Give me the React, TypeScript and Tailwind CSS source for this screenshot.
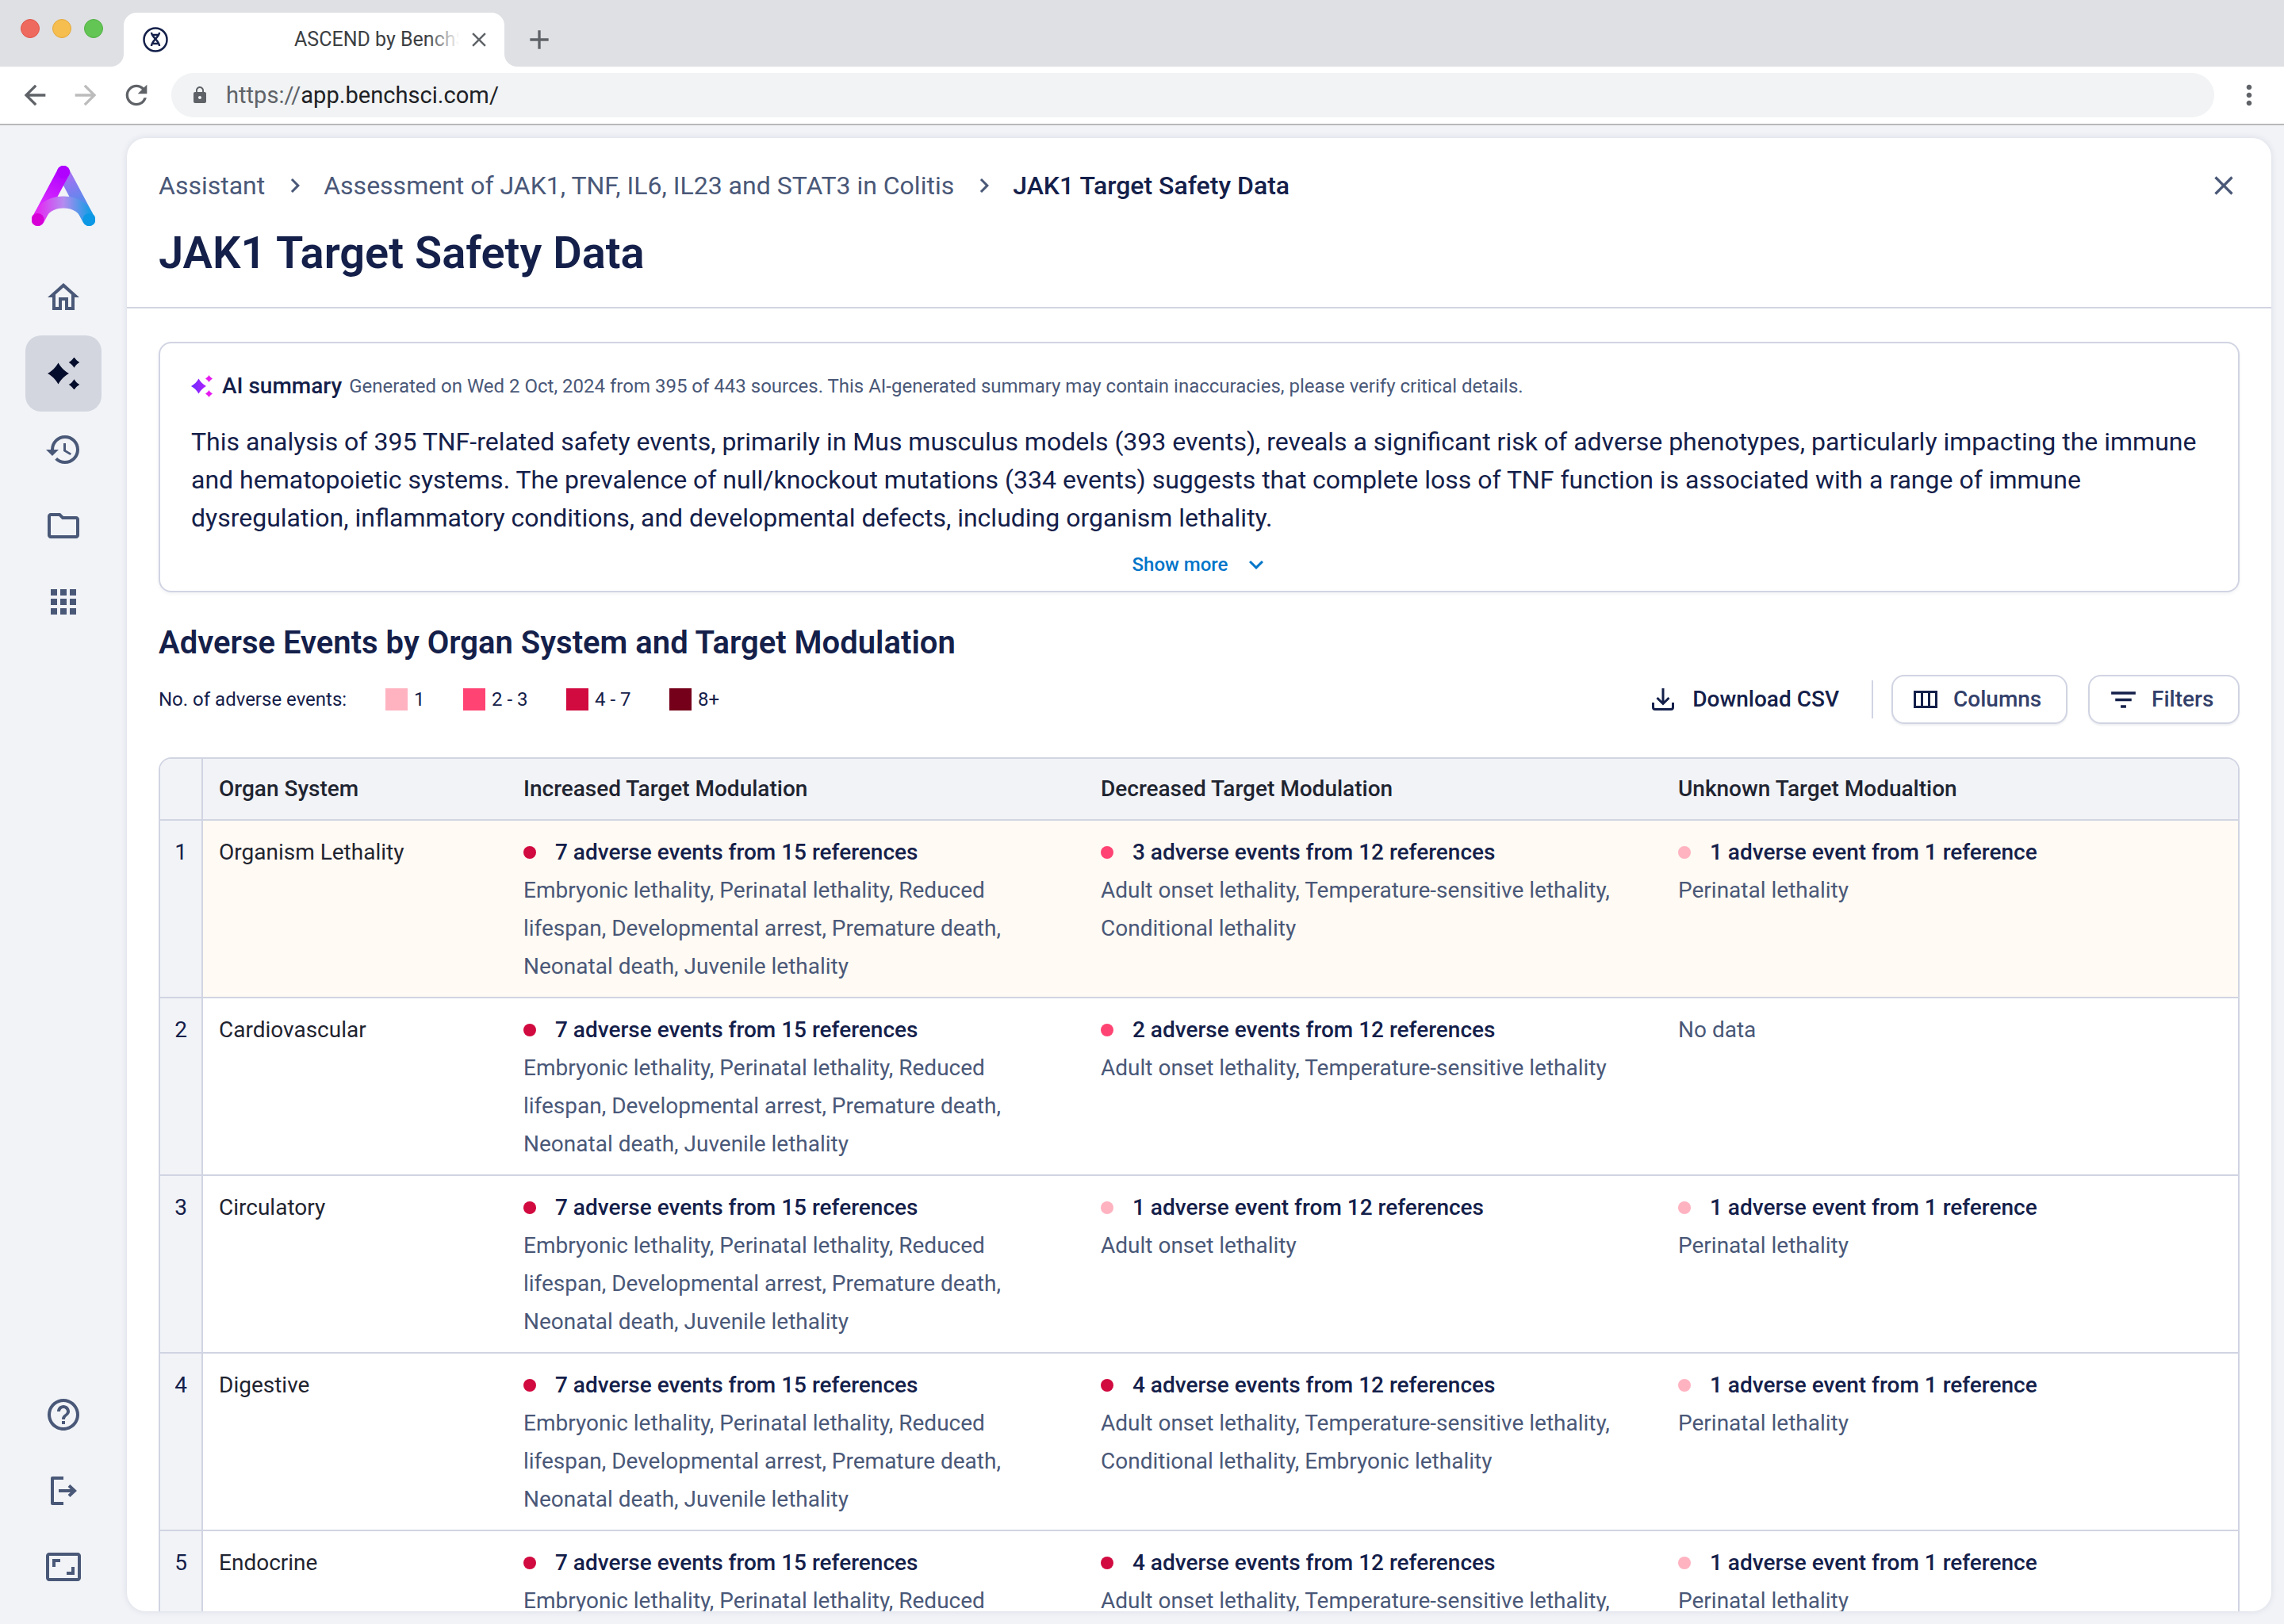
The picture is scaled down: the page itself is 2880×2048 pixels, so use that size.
import { MdAdd, MdApps, MdArrowBack, MdArrowForward, MdChevronRight, MdClose, MdFilterList, MdHelpOutline, MdHistory, MdKeyboardArrowDown, MdLock, MdMoreVert, MdOutlineAspectRatio, MdOutlineFolder, MdOutlineHome, MdRefresh } from 'react-icons/md'

const LETHAL_A = 'Embryonic lethality, Perinatal lethality, Reduced lifespan, Developmental arrest, Premature death, Neonatal death, Juvenile lethality'
const LETHAL_B = 'Adult onset lethality, Temperature-sensitive lethality, Conditional lethality'
const LETHAL_C = 'Adult onset lethality, Temperature-sensitive lethality'
const LETHAL_D = 'Adult onset lethality, Temperature-sensitive lethality, Conditional lethality, Embryonic lethality'

type Cell = { dot: string; title: string; text: string } | null

const DOT = { one: 'bg-[#ffb3c1]', two: 'bg-[#ff4372]', four: 'bg-[#d10a3f]' }

const incr: Cell = { dot: DOT.four, title: '7 adverse events from 15 references', text: LETHAL_A }
const unkn: Cell = { dot: DOT.one, title: '1 adverse event from 1 reference', text: 'Perinatal lethality' }

const ROWS: { name: string; dec: Cell; unk: Cell; hl?: boolean }[] = [
  { name: 'Organism Lethality', hl: true, dec: { dot: DOT.two, title: '3 adverse events from 12 references', text: LETHAL_B }, unk: unkn },
  { name: 'Cardiovascular', dec: { dot: DOT.two, title: '2 adverse events from 12 references', text: LETHAL_C }, unk: null },
  { name: 'Circulatory', dec: { dot: DOT.one, title: '1 adverse event from 12 references', text: 'Adult onset lethality' }, unk: unkn },
  { name: 'Digestive', dec: { dot: DOT.four, title: '4 adverse events from 12 references', text: LETHAL_D }, unk: unkn },
  { name: 'Endocrine', dec: { dot: DOT.four, title: '4 adverse events from 12 references', text: LETHAL_D }, unk: unkn },
]

const LEGEND = [
  { label: '1', cls: 'bg-[#ffb3c1]', w: 'w-[98px]' },
  { label: '2 - 3', cls: 'bg-[#ff4372]', w: 'w-[130px]' },
  { label: '4 - 7', cls: 'bg-[#d10a3f]', w: 'w-[130px]' },
  { label: '8+', cls: 'bg-[#750019]', w: 'w-[70px]' },
]

function star(cx: number, cy: number, r: number) {
  const k = r * 0.27
  return `M${cx} ${cy - r}C${cx + k} ${cy - k * 2} ${cx + k * 2} ${cy - k} ${cx + r} ${cy}C${cx + k * 2} ${cy + k} ${cx + k} ${cy + k * 2} ${cx} ${cy + r}C${cx - k} ${cy + k * 2} ${cx - k * 2} ${cy + k} ${cx - r} ${cy}C${cx - k * 2} ${cy - k} ${cx - k} ${cy - k * 2} ${cx} ${cy - r}Z`
}

function Logo() {
  return (
    <svg width="80" height="76" viewBox="0 0 80 76" fill="none">
      <defs>
        <linearGradient id="lg-l" x1="40" y1="8" x2="8" y2="68" gradientUnits="userSpaceOnUse">
          <stop offset="0" stopColor="#b000ff" />
          <stop offset="1" stopColor="#e93cff" />
        </linearGradient>
        <linearGradient id="lg-r" x1="40" y1="8" x2="72" y2="68" gradientUnits="userSpaceOnUse">
          <stop offset="0" stopColor="#b06cf5" />
          <stop offset="1" stopColor="#2a9be6" />
        </linearGradient>
        <linearGradient id="lg-a" x1="8" y1="0" x2="72" y2="0" gradientUnits="userSpaceOnUse">
          <stop offset="0" stopColor="#e22cf2" />
          <stop offset="0.5" stopColor="#b48cf0" />
          <stop offset="1" stopColor="#1d9ce6" />
        </linearGradient>
      </defs>
      <path d="M72 68L40 8" stroke="url(#lg-r)" strokeWidth="16" strokeLinecap="round" />
      <path d="M8 68L40 8" stroke="url(#lg-l)" strokeWidth="16" strokeLinecap="round" />
      <path d="M8 68C14 52 26 46 40 46C54 46 66 52 72 68" stroke="url(#lg-a)" strokeWidth="15" strokeLinecap="round" />
      <circle cx="40" cy="8" r="8" fill="#b000ff" />
      <circle cx="7.5" cy="68" r="8" fill="#d600d6" />
      <circle cx="72.5" cy="68" r="8" fill="#0d98e5" />
    </svg>
  )
}

function Favicon() {
  return (
    <svg width="32" height="32" viewBox="0 0 32 32" fill="none" stroke="#14204a">
      <ellipse cx="16" cy="16" rx="14.5" ry="14.5" strokeWidth="2.5" />
      <path d="M11 7C11 13 21 17 21 24M21 7C21 13 11 17 11 24M12 10H20M11.5 21H20.5" strokeWidth="2.4" />
    </svg>
  )
}

function Sparkle({ grad }: { grad?: boolean }) {
  if (grad) {
    return (
      <svg width="28" height="28" viewBox="0 0 28 28">
        <defs>
          <linearGradient id="sp-g" x1="0" y1="0" x2="19" y2="0" gradientUnits="userSpaceOnUse">
            <stop offset="0" stopColor="#6a2cff" />
            <stop offset="1" stopColor="#b320ff" />
          </linearGradient>
        </defs>
        <path d={star(9.5, 14, 9.5)} fill="url(#sp-g)" />
        <path d={star(22.5, 4.5, 4.5)} fill="#e619f0" />
        <path d={star(22.5, 23.5, 4.5)} fill="#e619f0" />
      </svg>
    )
  }
  return (
    <svg width="40" height="40" viewBox="0 0 40 40" fill="#040d2b">
      <path d={star(13.5, 20, 13.5)} />
      <path d={star(33.5, 6, 6.8)} />
      <path d={star(33.5, 34, 6.8)} />
    </svg>
  )
}

function Logout() {
  return (
    <svg width="36" height="36" viewBox="0 0 36 36" fill="none" stroke="#4a5878" strokeWidth="4">
      <path d="M18 2H4V34H18" strokeLinejoin="round" />
      <path d="M12 18H31M25 11.5L32 18L25 24.5" />
    </svg>
  )
}

function Download() {
  return (
    <svg width="28" height="28" viewBox="0 0 28 28" fill="none" stroke="#14204a" strokeWidth="3">
      <path d="M14 0V19M6.5 12L14 19.5L21.5 12" />
      <path d="M1.5 18V24C1.5 25.5 2.5 26.5 4 26.5H24C25.5 26.5 26.5 25.5 26.5 24V18" />
    </svg>
  )
}

function ColumnsIcon() {
  return (
    <svg width="30" height="22" viewBox="0 0 30 22" fill="none" stroke="#14204a" strokeWidth="3">
      <rect x="1.5" y="1.5" width="27" height="19" />
      <path d="M10.5 2V20M19.5 2V20" />
    </svg>
  )
}

function NavItem({ children, active }: { children: React.ReactNode; active?: boolean }) {
  return (
    <div className={`w-[96px] h-[96px] rounded-[20px] flex items-center justify-center text-[#4a5878] ${active ? 'bg-[#d3d6df]' : ''}`}>
      {children}
    </div>
  )
}

function EventCell({ cell, bg }: { cell: Cell; bg: string }) {
  return (
    <div className={`pl-5 pr-[60px] pt-[16px] overflow-hidden ${bg}`}>
      {cell ? (
        <>
          <div className="flex items-center gap-[24px]">
            <span className={`w-4 h-4 rounded-full shrink-0 ${cell.dot}`} />
            <span className="font-medium text-[#14204a]">{cell.title}</span>
          </div>
          <p className="text-[#4a5878]">{cell.text}</p>
        </>
      ) : (
        <p className="text-[#4a5878]">No data</p>
      )}
    </div>
  )
}

export default function App() {
  return (
    <div className="w-[2880px] h-[2048px] overflow-hidden flex flex-col bg-[#f1f3f7] font-['Roboto',sans-serif]">
      {/* Browser tabs */}
      <div className="h-[84px] shrink-0 bg-[#dfe0e4] flex">
        <div className="w-[156px] flex items-center gap-4 pl-[26px] pb-[16px] pt-[4px]">
          <span className="w-6 h-6 rounded-full bg-[#ee6a5f] border border-[#e0564a]" />
          <span className="w-6 h-6 rounded-full bg-[#f6be4f] border border-[#e3a93c]" />
          <span className="w-6 h-6 rounded-full bg-[#62c554] border border-[#52b043]" />
        </div>
        <div className="relative mt-[16px] w-[480px] h-[68px] bg-white rounded-t-[16px] flex items-center pl-[24px] text-[#3c4043]">
          <div className="absolute -left-4 bottom-0 w-4 h-4 bg-white"><div className="w-full h-full bg-[#dfe0e4] rounded-br-[16px]" /></div>
          <div className="absolute -right-4 bottom-0 w-4 h-4 bg-white"><div className="w-full h-full bg-[#dfe0e4] rounded-bl-[16px]" /></div>
          <Favicon />
          <div className="relative ml-[159px] w-[208px] overflow-hidden whitespace-nowrap text-[25px] leading-[34px]">
            ASCEND by BenchSci
            <div className="absolute right-0 top-0 bottom-0 w-[40px] bg-gradient-to-r from-transparent to-white" />
          </div>
          <MdClose size={30} className="ml-[10px] text-[#5f6368]" />
        </div>
        <MdAdd size={40} className="ml-[24px] mt-[30px] text-[#5f6368]" />
      </div>

      {/* Browser toolbar */}
      <div className="h-[74px] shrink-0 bg-white border-b-2 border-[#b8b8b8] flex items-start pt-[8px]">
        <div className="w-[216px] h-[56px] flex items-center pl-[24px] gap-[24px] text-[#5f6368]">
          <MdArrowBack size={40} />
          <MdArrowForward size={40} className="text-[#bcbcbc]" />
          <MdRefresh size={40} />
        </div>
        <div className="w-[2576px] h-[56px] rounded-full bg-[#f1f3f4] flex items-center pl-[24px] pt-[2px] text-[29.1px]">
          <MdLock size={24} className="text-[#5f6368] -mt-[2px]" />
          <span className="ml-[21px] text-[#5f6368]">https://</span>
          <span className="text-[#202124]">app.benchsci.com/</span>
        </div>
        <MdMoreVert size={40} className="ml-[24px] mt-[8px] text-[#5f6368]" />
      </div>

      <div className="flex-1 min-h-0 flex">
        {/* Sidebar */}
        <aside className="w-[160px] shrink-0 flex flex-col items-center pb-[24px]">
          <div className="mt-[51px] mb-[42px]"><Logo /></div>
          <NavItem><MdOutlineHome size={48} /></NavItem>
          <NavItem active><Sparkle /></NavItem>
          <NavItem><MdHistory size={48} /></NavItem>
          <NavItem><MdOutlineFolder size={48} /></NavItem>
          <NavItem><MdApps size={48} /></NavItem>
          <div className="mt-auto flex flex-col items-center">
            <NavItem><MdHelpOutline size={48} /></NavItem>
            <NavItem><Logout /></NavItem>
            <NavItem><MdOutlineAspectRatio size={48} /></NavItem>
          </div>
        </aside>

        {/* Main card */}
        <main className="flex-1 min-w-0 mt-[16px] mb-[16px] mr-[16px] bg-white rounded-[24px] shadow-[0_0_8px_rgba(40,50,90,0.12)] overflow-hidden">
          <header className="h-[215px] border-b-2 border-[#d1d4e2] px-[40px] pt-[36px]">
            <div className="flex items-center h-[48px] text-[32px] text-[#4a5878]">
              <span>Assistant</span>
              <MdChevronRight size={36} className="ml-[20px] mr-[18px]" />
              <span>Assessment of JAK1, TNF, IL6, IL23 and STAT3 in Colitis</span>
              <MdChevronRight size={36} className="ml-[20px] mr-[18px]" />
              <span className="font-medium text-[#14204a]">JAK1 Target Safety Data</span>
              <MdClose size={40} className="ml-auto text-[#4a5878]" />
            </div>
            <h1 className="mt-[29px] text-[56px] leading-[64px] font-semibold text-[#14204a]">JAK1 Target Safety Data</h1>
          </header>

          <div className="px-[40px] pt-[42px]">
            {/* AI summary */}
            <section className="h-[316px] border-2 border-[#d1d4e2] rounded-[16px] shadow-[0_2px_4px_rgba(40,50,90,0.06)] pl-[39px] pr-[39px] pt-[34px]">
              <div className="flex items-center h-[40px]">
                <Sparkle grad />
                <span className="ml-[11px] text-[28px] font-medium text-[#14204a]">AI summary</span>
                <span className="ml-[9px] text-[24px] text-[#4a5878]">Generated on Wed 2 Oct, 2024 from 395 of 443 sources. This AI-generated summary may contain inaccuracies, please verify critical details.</span>
              </div>
              <p className="mt-[26px] text-[32px] leading-[48px] text-[#14204a]">
                This analysis of 395 TNF-related safety events, primarily in Mus musculus models (393 events), reveals a significant risk of adverse phenotypes, particularly impacting the immune and hematopoietic systems. The prevalence of null/knockout mutations (334 events) suggests that complete loss of TNF function is associated with a range of immune dysregulation, inflammatory conditions, and developmental defects, including organism lethality.
              </p>
              <div className="mt-[17px] pl-[6px] flex items-center justify-center gap-[18px] text-[24px] font-medium text-[#0075c9]">
                Show more <MdKeyboardArrowDown size={36} />
              </div>
            </section>

            <h2 className="mt-[40px] text-[40px] leading-[48px] font-semibold text-[#14204a]">Adverse Events by Organ System and Target Modulation</h2>

            {/* Legend and actions */}
            <div className="mt-[15px] h-[64px] flex items-center">
              <span className="w-[286px] text-[24px] text-[#14204a]">No. of adverse events:</span>
              {LEGEND.map(l => (
                <div key={l.label} className={`flex items-center gap-[8px] text-[24px] text-[#14204a] shrink-0 ${l.w}`}>
                  <span className={`w-[28px] h-[28px] ${l.cls}`} />
                  {l.label}
                </div>
              ))}
              <div className="ml-auto flex items-center">
                <Download />
                <span className="ml-[23px] text-[28px] font-medium text-[#14204a]">Download CSV</span>
                <span className="ml-[41px] w-[2px] h-[48px] bg-[#d1d4e2]" />
                <button className="ml-[23px] h-[62px] w-[222px] border-2 border-[#d1d4e2] rounded-[16px] shadow-[0_2px_2px_rgba(40,50,90,0.08)] flex items-center pl-[26px] gap-[20px] text-[28px] font-medium text-[#33406a]">
                  <ColumnsIcon />
                  Columns
                </button>
                <button className="ml-[26px] h-[62px] w-[191px] border-2 border-[#d1d4e2] rounded-[16px] shadow-[0_2px_2px_rgba(40,50,90,0.08)] flex items-center pl-[22px] gap-[15px] text-[28px] font-medium text-[#33406a]">
                  <MdFilterList size={41} className="text-[#14204a]" />
                  Filters
                </button>
              </div>
            </div>

            {/* Table */}
            <div className="mt-[41px] border-2 border-b-0 border-[#d1d4e2] rounded-t-[16px] overflow-hidden text-[28px] leading-[48px]">
              <div className="grid grid-cols-[54px_384px_728px_728px_1fr] bg-[#f1f3f7] border-b-2 border-[#d1d4e2] h-[78px] items-stretch font-medium text-[#1f2430]">
                <div className="border-r-2 border-[#d1d4e2]" />
                <div className="pl-5 flex items-center">Organ System</div>
                <div className="pl-5 flex items-center">Increased Target Modulation</div>
                <div className="pl-5 flex items-center">Decreased Target Modulation</div>
                <div className="pl-5 flex items-center">Unknown Target Modualtion</div>
              </div>
              {ROWS.map((r, i) => {
                const bg = r.hl ? 'bg-[#fffaf3]' : 'bg-white'
                return (
                  <div key={r.name} className="grid grid-cols-[54px_384px_728px_728px_1fr] grid-rows-[222px] border-b-2 border-[#d1d4e2] h-[224px]">
                    <div className="border-r-2 border-[#d1d4e2] bg-[#f1f3f7] text-center pt-[16px] text-[#14204a]">{i + 1}</div>
                    <div className={`pl-5 pt-[16px] text-[#1f2430] ${bg}`}>{r.name}</div>
                    <EventCell cell={incr} bg={bg} />
                    <EventCell cell={r.dec} bg={bg} />
                    <EventCell cell={r.unk} bg={bg} />
                  </div>
                )
              })}
            </div>
          </div>
        </main>
      </div>
    </div>
  )
}
